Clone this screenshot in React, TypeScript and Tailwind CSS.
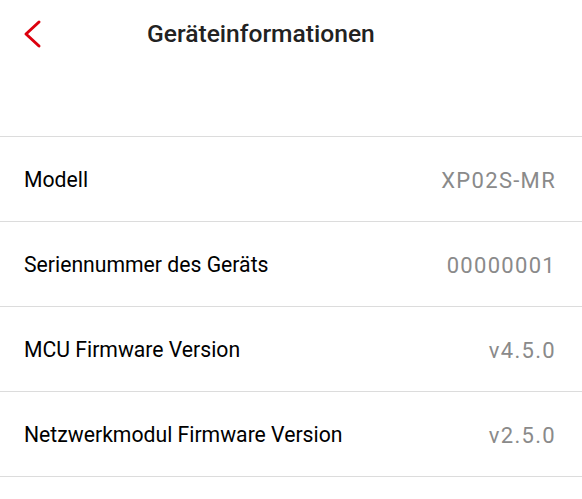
import React from "react";

const rows = [
  { label: "Modell", value: "XP02S-MR" },
  { label: "Seriennummer des Geräts", value: "00000001" },
  { label: "MCU Firmware Version", value: "v4.5.0" },
  { label: "Netzwerkmodul Firmware Version", value: "v2.5.0" },
];

export default function App() {
  return (
    <div
      className="w-[582px] h-[499px] bg-white overflow-hidden"
      style={{ fontFamily: "Roboto, 'Noto Sans', sans-serif" }}
    >
      <header className="relative h-[68px] flex items-center pl-[147px]">
        <button className="absolute left-[22px] top-[19px] w-[20px] h-[30px]">
          <svg width="20" height="30" viewBox="0 0 20 30" fill="none">
            <path d="M17 3 L4 15 L17 27" stroke="#dc000e" strokeWidth="3" strokeLinecap="round" strokeLinejoin="round" />
          </svg>
        </button>
        <h1 className="text-[24.6px] font-medium text-[#222]">Geräteinformationen</h1>
      </header>
      <div className="h-[68px]" />
      <div className="border-t border-[#dcdcdc]">
        {rows.map((r) => (
          <div
            key={r.label}
            className="h-[85px] flex items-center justify-between pl-[24px] pr-[26px] border-b border-[#dcdcdc]"
          >
            <span className="text-[21.2px] text-black mt-[2px]">{r.label}</span>
            <span className="text-[22px] tracking-[1.3px] text-[#8a8a8a] mt-[2px]">{r.value}</span>
          </div>
        ))}
      </div>
    </div>
  );
}
